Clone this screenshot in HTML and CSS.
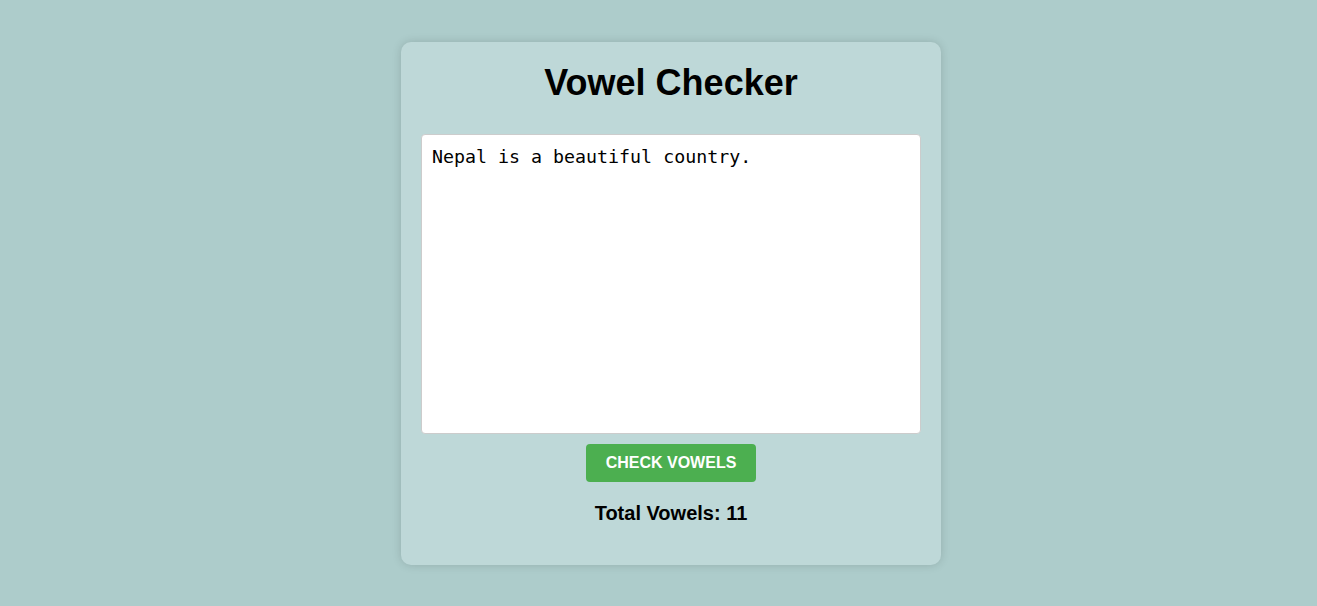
FILE: index.html
```html
<!DOCTYPE html>
<html>
<head>
<meta charset="utf-8">
<title>Vowel Checker</title>
<link rel="stylesheet" href="styles.css">
</head>
<body>
<div class="page">
  <div class="card">
    <h1 class="title">Vowel Checker</h1>
    <textarea class="input">Nepal is a beautiful country.</textarea>
    <button class="btn">CHECK VOWELS</button>
    <p class="result">Total Vowels: 11</p>
  </div>
</div>
</body>
</html>
```

FILE: styles.css
```css
html, body {
  margin: 0;
  padding: 0;
}
body {
  background: #adcccb;
  font-family: "Liberation Sans", Arial, sans-serif;
  height: 606px;
}
.page {
  display: flex;
  justify-content: center;
  padding-top: 42px;
  padding-left: 25px;
}
.card {
  width: 500px;
  padding: 20px 20px 40px;
  background: #bed8d8;
  border-radius: 10px;
  box-shadow: 0 0 10px rgba(0, 0, 0, 0.15);
  display: flex;
  flex-direction: column;
  align-items: center;
}
.title {
  margin: 0 0 31px;
  font-size: 36px;
  font-weight: bold;
  color: #000;
  line-height: 41px;
}
.input {
  box-sizing: border-box;
  width: 500px;
  height: 300px;
  padding: 10px;
  border: 1px solid #cccccc;
  border-radius: 4px;
  background: #fff;
  font-family: "DejaVu Sans Mono", monospace;
  font-size: 18.3px;
  line-height: 24px;
  color: #000;
  resize: none;
  margin: 0;
}
.btn {
  margin-top: 10px;
  width: 170px;
  height: 38px;
  background: #4caf50;
  color: #fff;
  border: none;
  border-radius: 4px;
  font-family: "Liberation Sans", Arial, sans-serif;
  font-weight: bold;
  font-size: 16px;
  cursor: pointer;
}
.result {
  margin: 20px 0 0;
  font-size: 20px;
  font-weight: bold;
  line-height: 23px;
  color: #000;
}
```
